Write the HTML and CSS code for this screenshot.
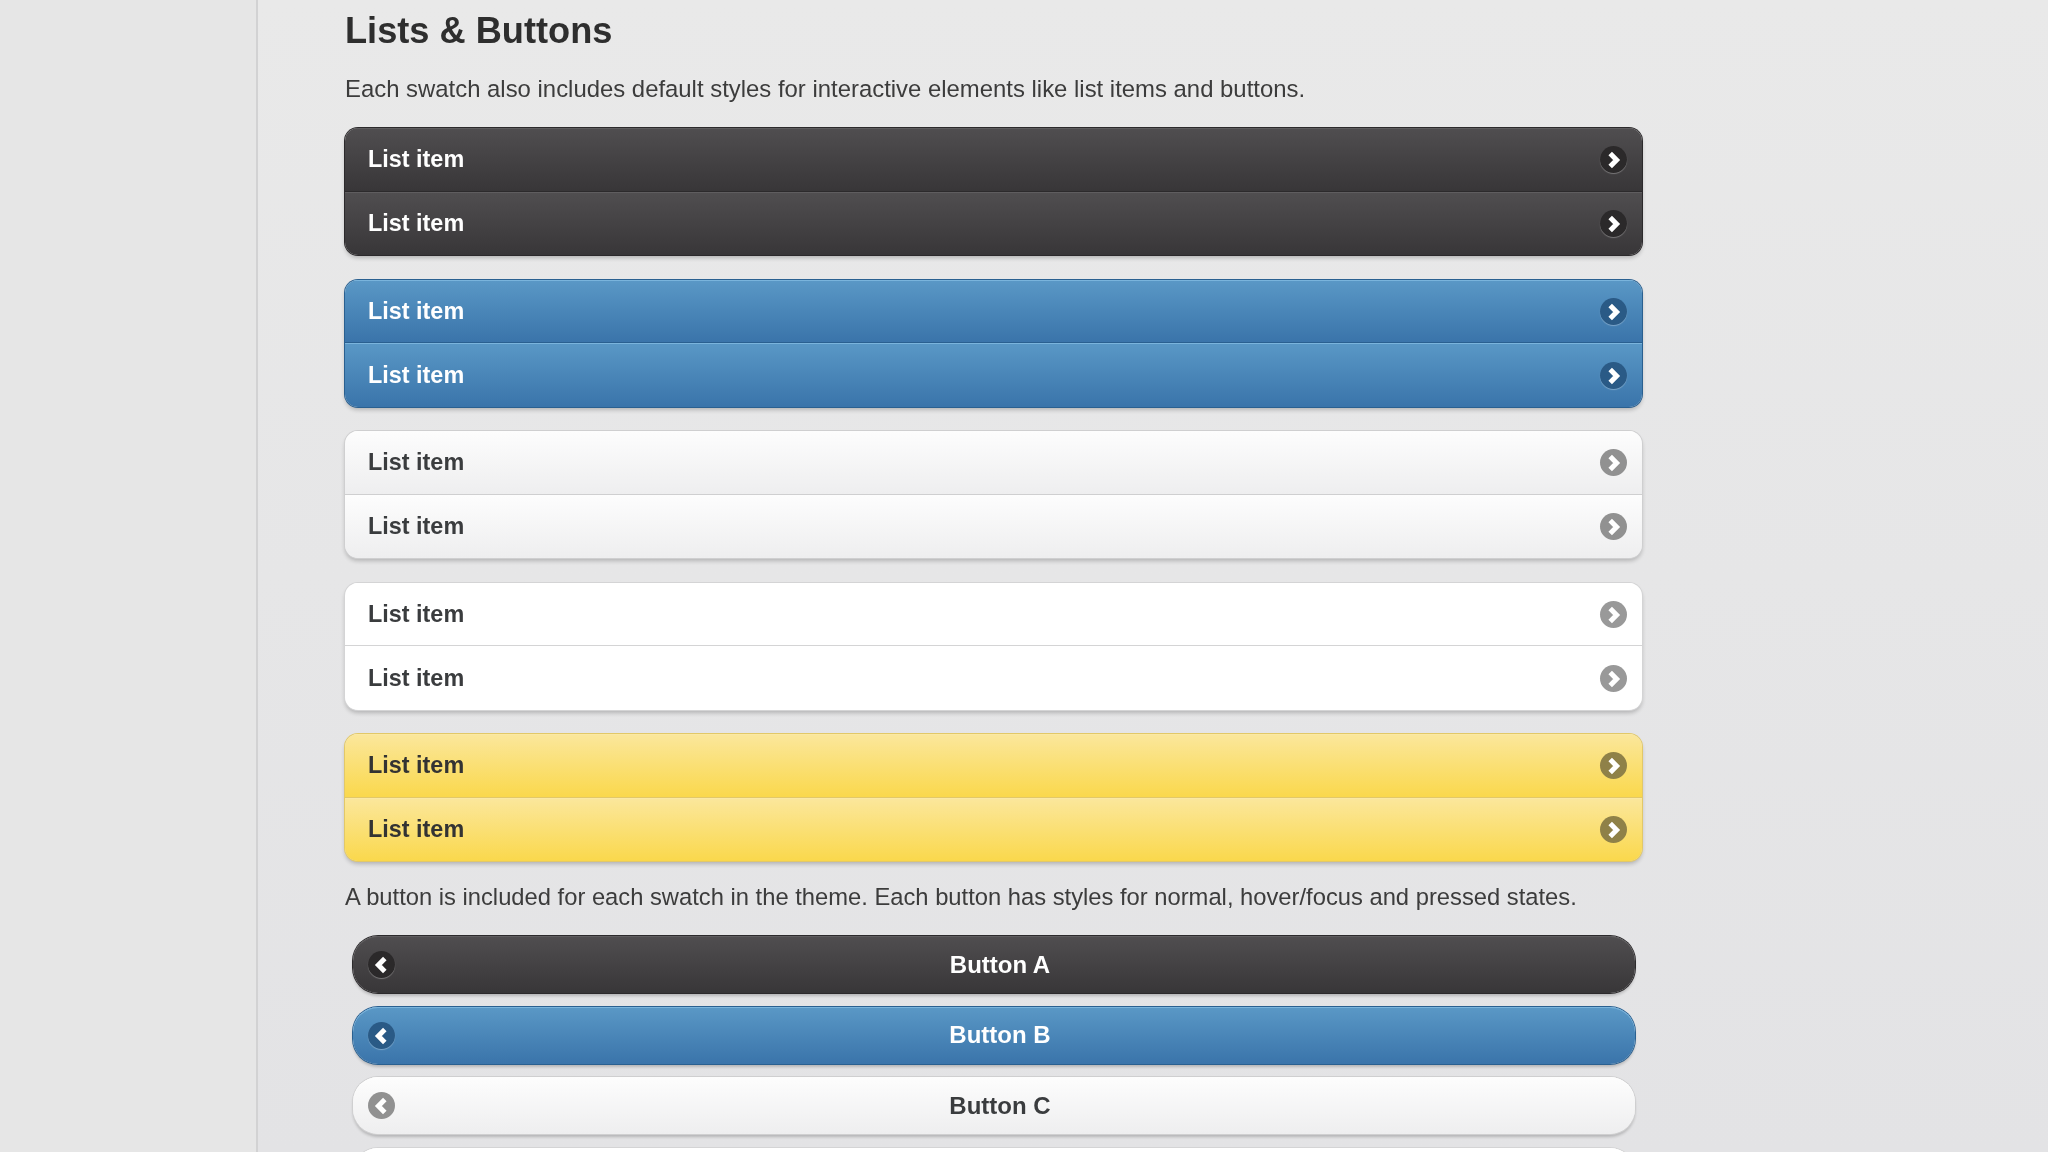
FILE: index.html
```html
<!DOCTYPE html>
<html lang="en">
<head>
  <meta charset="UTF-8" />
  <meta name="viewport" content="width=device-width, initial-scale=1.0"/>
  <title>Lists &amp; Buttons</title>
  <link rel="stylesheet" href="styles.css">
</head>
<body>
  <svg class="icon-defs" aria-hidden="true">
    <symbol id="chevron-right" viewBox="0 0 27 27">
      <path d="M10.2 7.6 16.6 14 10.2 20.4" fill="none" stroke="#fff" stroke-width="5"/>
    </symbol>
    <symbol id="chevron-left" viewBox="0 0 27 27">
      <path d="M16.8 7.6 10.4 14 16.8 20.4" fill="none" stroke="#fff" stroke-width="5"/>
    </symbol>
  </svg>

  <aside class="sidebar"></aside>

  <main class="content">
    <h2>Lists &amp; Buttons</h2>
    <p class="intro">Each swatch also includes default styles for interactive elements like list items and buttons.</p>

    <ul class="list swatch-a">
      <li>List item <span class="icon"><svg><use href="#chevron-right"/></svg></span></li>
      <li>List item <span class="icon"><svg><use href="#chevron-right"/></svg></span></li>
    </ul>
    <ul class="list swatch-b">
      <li>List item <span class="icon"><svg><use href="#chevron-right"/></svg></span></li>
      <li>List item <span class="icon"><svg><use href="#chevron-right"/></svg></span></li>
    </ul>
    <ul class="list swatch-c">
      <li>List item <span class="icon"><svg><use href="#chevron-right"/></svg></span></li>
      <li>List item <span class="icon"><svg><use href="#chevron-right"/></svg></span></li>
    </ul>
    <ul class="list swatch-d">
      <li>List item <span class="icon"><svg><use href="#chevron-right"/></svg></span></li>
      <li>List item <span class="icon"><svg><use href="#chevron-right"/></svg></span></li>
    </ul>
    <ul class="list swatch-e">
      <li>List item <span class="icon"><svg><use href="#chevron-right"/></svg></span></li>
      <li>List item <span class="icon"><svg><use href="#chevron-right"/></svg></span></li>
    </ul>

    <p class="note">A button is included for each swatch in the theme. Each button has styles for normal, hover/focus and pressed states.</p>

    <div class="buttons">
      <a href="#" class="btn swatch-a"><span class="icon"><svg><use href="#chevron-left"/></svg></span>Button A</a>
      <a href="#" class="btn swatch-b"><span class="icon"><svg><use href="#chevron-left"/></svg></span>Button B</a>
      <a href="#" class="btn swatch-c"><span class="icon"><svg><use href="#chevron-left"/></svg></span>Button C</a>
      <a href="#" class="btn swatch-d"></a>
    </div>
  </main>
</body>
</html>
```

FILE: styles.css
```css
body {
  font-family: "Liberation Sans", Arial, sans-serif;
  margin: 0;
  padding: 0;
  background: linear-gradient(#e9e9e9, #e3e3e5);
  color: #333;
  display: flex;
  height: 1152px;
  overflow: hidden;
}

.icon-defs {
  display: none;
}

.sidebar {
  width: 256px;
  flex-shrink: 0;
  border-right: 2px solid #d2d2d3;
  background: #e6e6e6;
}

.content {
  width: 1297px;
  margin-left: 87px;
  filter: blur(0.5px);
}

h2 {
  margin: 8px 0 0;
  font-size: 36.2px;
  line-height: 46px;
  font-weight: bold;
  color: #2e2e2e;
}

p {
  margin: 0;
  line-height: 32px;
  color: #3c3c3c;
}

.intro {
  margin-top: 19px;
  margin-bottom: 23px;
  font-size: 23.9px;
}

.note {
  font-size: 23.75px;
}

/* colours for each swatch */
.swatch-a {
  color: #fff;
  --top: #504e50;
  --bottom: #383638;
  --line: #2c2a2c;
  --shine: #5f5d5f;
  --disc: #2b292a;
}

.swatch-b {
  color: #fff;
  --top: #5a98c6;
  --bottom: #3a74aa;
  --line: #2a6090;
  --shine: #7ab4dc;
  --disc: #2a5a86;
}

.swatch-c {
  color: #3a3c3e;
  --top: #fdfdfd;
  --bottom: #eeeeef;
  --line: #cfcfd0;
  --shine: #fdfdfd;
  --disc: #919191;
}

.swatch-d {
  color: #3a3c3e;
  --top: #fff;
  --bottom: #fff;
  --line: #d4d4d5;
  --shine: #fff;
  --disc: #999;
}

.swatch-e {
  color: #333;
  --top: #fbe79c;
  --bottom: #fad84c;
  --line: #e2c868;
  --shine: #fbe9a4;
  --disc: #8f8148;
}

.list {
  list-style: none;
  margin: 0 0 24.5px;
  padding: 0;
  border-radius: 13px;
  overflow: hidden;
  box-shadow: 0 0 0 1px var(--line), 0 3px 4px rgba(0, 0, 0, 0.22);
}

.list.swatch-e {
  margin-bottom: 20px;
}

.list li {
  height: 63.5px;
  box-sizing: border-box;
  display: flex;
  align-items: center;
  justify-content: space-between;
  padding: 1px 15px 0 23px;
  font-size: 23.4px;
  font-weight: bold;
  background: linear-gradient(var(--top), var(--bottom));
  box-shadow: inset 0 1px 0 var(--shine);
  border-bottom: 1px solid var(--line);
}

.list li:last-child {
  border-bottom: 0;
}

.icon {
  width: 27px;
  height: 27px;
  border-radius: 50%;
  flex-shrink: 0;
  background: var(--disc);
}

.icon svg {
  display: block;
  width: 27px;
  height: 27px;
}

.swatch-a .icon,
.swatch-b .icon {
  box-shadow: 0 1px 1px rgba(255, 255, 255, 0.3);
}

.buttons {
  display: flex;
  flex-direction: column;
  gap: 13.5px;
  margin: 23px 7px 0 8px;
}

.btn {
  height: 57px;
  flex-shrink: 0;
  box-sizing: border-box;
  display: flex;
  align-items: center;
  justify-content: center;
  padding: 0 16px 0 28px;
  position: relative;
  border-radius: 25px;
  font-size: 24px;
  font-weight: bold;
  text-decoration: none;
  background: linear-gradient(var(--top), var(--bottom));
  box-shadow: inset 0 1px 0 var(--shine), 0 0 0 1px var(--line), 0 3px 3px rgba(0, 0, 0, 0.2);
}

.btn .icon {
  position: absolute;
  left: 15px;
  top: 15px;
}
```
